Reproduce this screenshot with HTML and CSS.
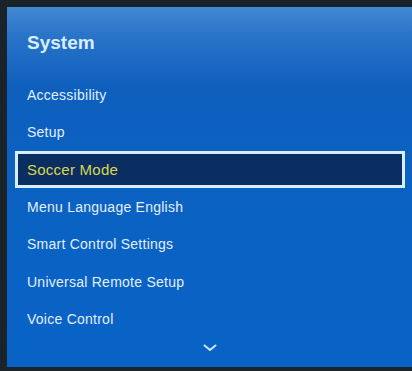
FILE: index.html
```html
<!DOCTYPE html>
<html lang="en">
<head>
  <meta charset="UTF-8">
  <meta name="viewport" content="width=device-width, initial-scale=1.0">
  <title>System</title>
  <link rel="stylesheet" href="styles.css">
</head>
<body>

  <div class="panel">
    <h1 class="title">System</h1>

    <ul class="menu">
      <li class="item">Accessibility</li>
      <li class="item">Setup</li>
      <li class="item selected">Soccer Mode</li>
      <li class="item">Menu Language English</li>
      <li class="item">Smart Control Settings</li>
      <li class="item">Universal Remote Setup</li>
      <li class="item">Voice Control</li>
    </ul>

    <!-- more below -->
    <div class="more">
      <svg viewBox="0 0 14 8" width="14" height="8">
        <polyline points="1.5,1.5 7,6 12.5,1.5" fill="none" stroke="#cfe6ff" stroke-width="2" stroke-linecap="round" stroke-linejoin="round" />
      </svg>
    </div>
  </div>

</body>
</html>
```

FILE: styles.css
```css
body {
  margin: 0;
  padding: 0;
  background-color: #1a222a;
  height: 371px;
  overflow: hidden;
  font-family: "Liberation Sans", Arial, sans-serif;
}

.panel {
  margin: 7px 0 0 7px;
  height: 360px;
  display: flex;
  flex-direction: column;
  background: linear-gradient(to bottom, #4288d2 0%, #2a74c9 8%, #0e5fbe 22%, #0a62c3 60%, #0963c6 100%);
  box-sizing: border-box;
}

.title {
  margin: 0;
  padding: 25px 0 0 20px;
  height: 52px;
  box-sizing: border-box;
  font-size: 19px;
  font-weight: bold;
  color: #d8eeff;
}

.menu {
  list-style: none;
  margin: 0;
  padding: 17px 7px 0 8px;
}

.item {
  height: 37.5px;
  display: flex;
  align-items: center;
  padding-left: 12px;
  box-sizing: border-box;
  font-size: 14px;
  letter-spacing: 0.25px;
  color: #e2efff;
}

.selected {
  height: 37px;
  margin: 0;
  border: 3px solid #d6eeff;
  padding-left: 9px;
  background-color: #0b2e62;
  color: #d8d84e;
  font-size: 15px;
}

.more {
  display: flex;
  justify-content: center;
  padding: 6px 0 0 0;
}
```
